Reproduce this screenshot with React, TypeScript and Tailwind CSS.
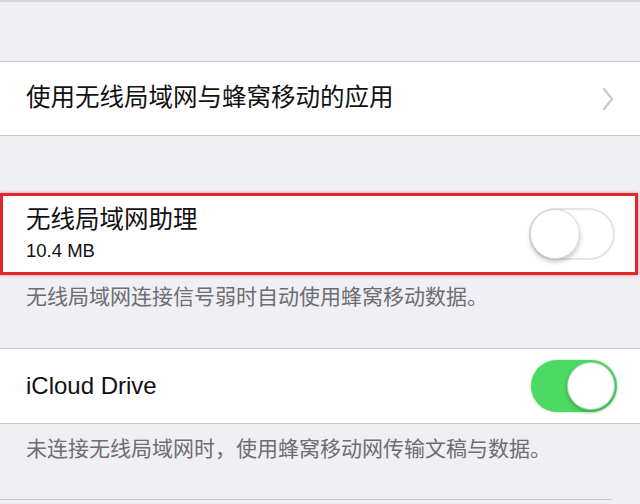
import React from "react";

const font = { fontFamily: '"Liberation Sans", "Noto Sans CJK SC", sans-serif' };

function Toggle({ on }: { on: boolean }) {
  if (on) {
    return (
      <div className="w-[86px] h-[52px] rounded-full bg-[#4cd964] relative shadow-[0_0_2px_rgba(76,217,100,0.6)]">
        <div className="absolute right-[2px] top-[2px] w-[48px] h-[48px] rounded-full bg-white shadow-[0_2px_4px_rgba(0,0,0,0.25)] border border-[#3a9a4a]/40" />
      </div>
    );
  }
  return (
    <div className="w-[86px] h-[52px] rounded-full bg-white border-2 border-[#e3e3e6] relative">
      <div className="absolute left-[-1px] top-[-1px] w-[50px] h-[50px] rounded-full bg-white border border-[#d8d8dc] shadow-[0_3px_5px_rgba(0,0,0,0.22)]" />
    </div>
  );
}

export default function App() {
  return (
    <div className="w-[640px] h-[504px] bg-[#efeff4] overflow-hidden flex flex-col" style={font}>
      <div className="h-[2px] border-t-2 border-[#d4d4d8]" />
      <div className="h-[59px]" />
      <div className="h-[75px] bg-white border-y border-[#c8c7cc] flex items-center pl-[26px] pr-[26px]">
        <div className="flex-1 text-[24.5px] text-[#111] leading-none">使用无线局域网与蜂窝移动的应用</div>
        <svg width="12" height="24" viewBox="0 0 12 24" fill="none">
          <path d="M2 2 L10 12 L2 22" stroke="#c7c7cc" strokeWidth="2.2" strokeLinecap="round" strokeLinejoin="round" />
        </svg>
      </div>
      <div className="h-[57px]" />
      <div className="h-[82px] bg-white border-[3px] border-[#e0282c] mr-[2px] flex items-center pl-[23px] pr-[20px] shadow-[0_0_3px_rgba(224,40,44,0.5)]">
        <div className="flex-1 flex flex-col">
          <div className="text-[24.5px] text-[#111] leading-none">无线局域网助理</div>
          <div className="text-[18.5px] text-[#111] leading-none mt-[9px]">10.4 MB</div>
        </div>
        <Toggle on={false} />
      </div>
      <div className="h-[73px] pl-[26px] pt-[10px] text-[21px] text-[#6d6d72] leading-[24px]">
        无线局域网连接信号弱时自动使用蜂窝移动数据。
      </div>
      <div className="h-[76px] bg-white border-y border-[#c8c7cc] flex items-center pl-[26px] pr-[23px]">
        <div className="flex-1 text-[24px] text-[#111] leading-none">iCloud Drive</div>
        <Toggle on={true} />
      </div>
      <div className="h-[75px] pl-[26px] pt-[13px] text-[21px] text-[#6d6d72] leading-[24px]">
        未连接无线局域网时，使用蜂窝移动网传输文稿与数据。
      </div>
      <div className="h-[2px] border-t border-[#c8c7cc] w-[612px]" />
    </div>
  );
}
